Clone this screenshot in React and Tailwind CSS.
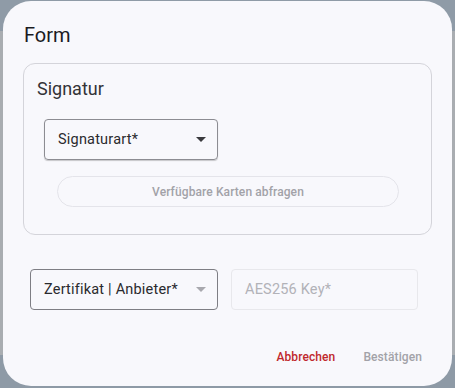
import React from "react";

function Caret({ color }) {
  return (
    <svg width="10" height="5" viewBox="0 0 10 5" className="shrink-0">
      <path d="M0 0 L10 0 L5 5 Z" fill={color} />
    </svg>
  );
}

export default function App() {
  return (
    <div
      className="w-[455px] h-[388px] bg-[#a9adb1] relative overflow-hidden"
      style={{ fontFamily: "Roboto, 'Noto Sans', sans-serif" }}
    >
      <div className="absolute left-0 top-0 w-full h-[31px] bg-[#8f9ba7]" />
      <div className="absolute left-0 top-[355px] w-full h-[33px] bg-[#8e9aa6]" />
      <div className="absolute left-[3px] top-[1px] w-[449px] h-[385px] bg-[#f8f8fc] rounded-[28px] flex flex-col">
        <div className="pl-[21px] pt-[21px] text-[20px] leading-[26px] text-[#1b1b1f]">Form</div>
        <div className="mx-[20px] mt-[15px] h-[172px] border border-[#d4d4da] rounded-[12px] flex flex-col">
          <div className="pl-[13px] pt-[14px] text-[18px] leading-[22px] text-[#333337]">Signatur</div>
          <div className="ml-[20px] mt-[19px] w-[174px] h-[41px] border border-[#8c8c92] rounded-[4px] shadow-[0_1px_1px_rgba(0,0,0,0.2)] flex items-center justify-between pl-[13px] pr-[11px]">
            <span className="text-[14.5px] text-[#2a2a2e] tracking-[0.2px]">Signaturart*</span>
            <Caret color="#3a3a3e" />
          </div>
          <div className="ml-[33px] mt-[16px] w-[342px] h-[31px] border border-[#e4e4ea] rounded-full flex items-center justify-center text-[12px] font-medium text-[#a2a2a8] tracking-[0.1px]">
            Verfügbare Karten abfragen
          </div>
        </div>
        <div className="mt-[34px] ml-[27px] flex gap-[13px]">
          <div className="w-[188px] h-[41px] border border-[#7e7e84] rounded-[4px] flex items-center justify-between pl-[13px] pr-[11px]">
            <span className="text-[14.5px] text-[#2a2a2e] tracking-[0.2px]">Zertifikat | Anbieter*</span>
            <Caret color="#a8a8ae" />
          </div>
          <div className="w-[187px] h-[41px] border border-[#e8e8ec] rounded-[4px] flex items-center pl-[13px]">
            <span className="text-[14.5px] text-[#b2b2b8] tracking-[0.2px]">AES256 Key*</span>
          </div>
        </div>
        <div className="mt-[38px] flex justify-end pr-[30px] gap-[28px] text-[12px] font-medium tracking-[0.1px]">
          <span className="text-[#c0282d]">Abbrechen</span>
          <span className="text-[#a2a2a8]">Bestätigen</span>
        </div>
      </div>
    </div>
  );
}
